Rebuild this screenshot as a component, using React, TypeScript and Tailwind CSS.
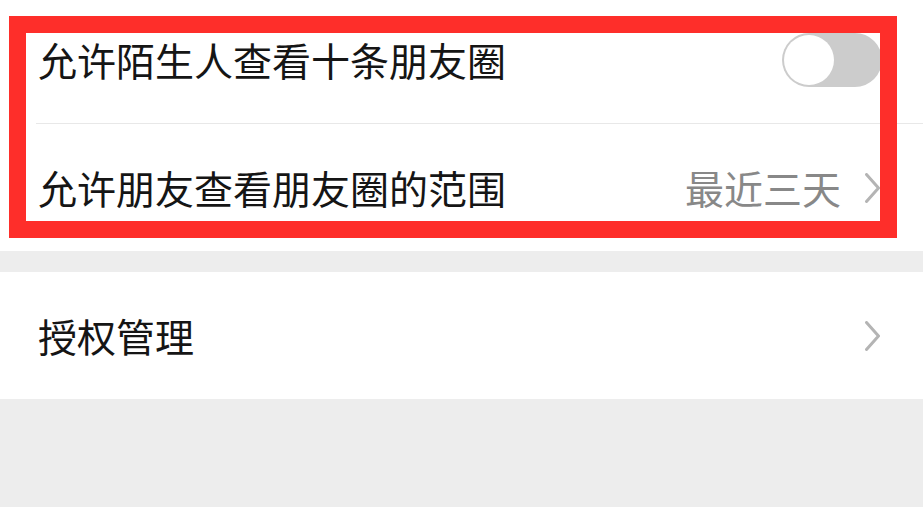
import React from "react";

function Chevron() {
  return (
    <svg width="15" height="30" viewBox="0 0 15 30" className="shrink-0">
      <polyline
        points="1.5,1.5 13.5,15 1.5,28.5"
        fill="none"
        stroke="#b4b4b4"
        strokeWidth="3"
        strokeLinecap="round"
        strokeLinejoin="round"
      />
    </svg>
  );
}

export default function App() {
  const font = {
    fontFamily: '"Noto Sans CJK SC", "Noto Sans", sans-serif',
  };
  return (
    <div
      className="relative w-[923px] h-[507px] overflow-hidden bg-[#ededed]"
      style={font}
    >
      <div className="bg-white mt-[-4px]">
        <div className="h-[127px] flex items-center justify-between pl-[38px] pr-[41px]">
          <span className="text-[39px] leading-none text-[#151515]">
            允许陌生人查看十条朋友圈
          </span>
          <div className="w-[100px] h-[54px] rounded-full bg-[#cccccc] p-[2px] flex items-center">
            <div className="w-[50px] h-[50px] rounded-full bg-white" />
          </div>
        </div>
        <div className="ml-[36px] h-[1px] bg-[#e8e8e8]" />
        <div className="h-[127px] flex items-center justify-between pl-[38px] pr-[43px]">
          <span className="text-[39px] leading-none text-[#151515]">
            允许朋友查看朋友圈的范围
          </span>
          <div className="flex items-center gap-[24px]">
            <span className="text-[39px] leading-none text-[#888888]">
              最近三天
            </span>
            <Chevron />
          </div>
        </div>
      </div>
      <div className="h-[21px]" />
      <div className="bg-white h-[127px] flex items-center justify-between pl-[38px] pr-[43px]">
        <span className="text-[39px] leading-none text-[#151515]">授权管理</span>
        <Chevron />
      </div>
      <div className="absolute left-[9px] top-[16px] w-[888px] h-[222px] border-[17px] border-[#fe2e2a]" />
    </div>
  );
}
